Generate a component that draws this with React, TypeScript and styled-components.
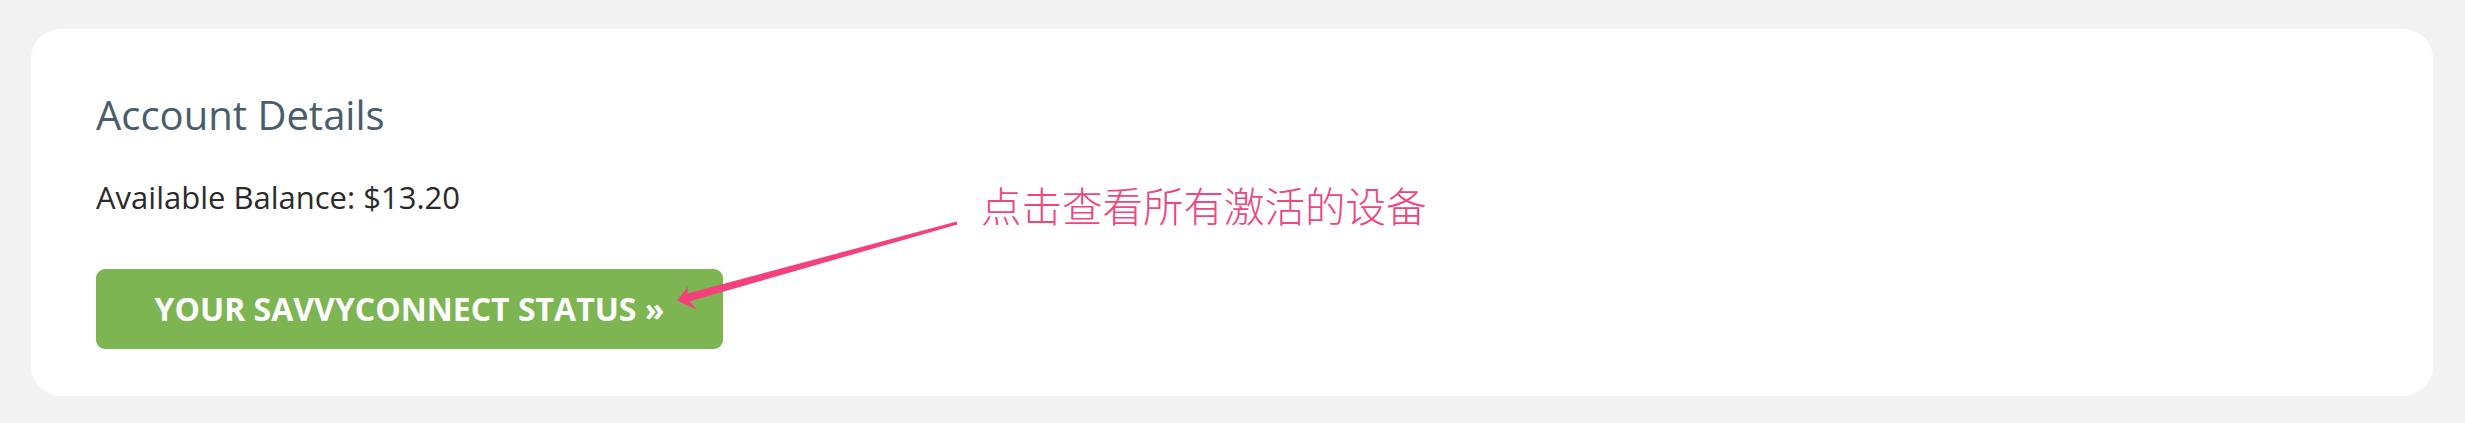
import React from "react";
import styled, { createGlobalStyle } from "styled-components";

const GlobalStyle = createGlobalStyle`
  html, body {
    margin: 0;
    padding: 0;
    background: #f3f3f3;
    font-family: "Open Sans", "Liberation Sans", sans-serif;
  }
  * { box-sizing: border-box; }
`;

const Page = styled.main`
  padding: 29px 32px 27px 31px;
`;

const Card = styled.section`
  position: relative;
  background: #ffffff;
  border-radius: 30px;
  padding: 62px 65px 47px;
`;

const Title = styled.h2`
  margin: 0 0 40px;
  font-size: 40px;
  line-height: 48px;
  font-weight: 400;
  color: #4a5d6b;
`;

const Balance = styled.p`
  margin: 0 0 54px;
  font-size: 31px;
  line-height: 36px;
  color: #2b2b2b;
`;

const StatusButton = styled.a`
  display: flex;
  align-items: center;
  justify-content: center;
  width: 627px;
  height: 80px;
  border-radius: 9px;
  background: #7db553;
  color: #ffffff;
  font-size: 32px;
  line-height: 32px;
  font-weight: 700;
  text-decoration: none;
  text-transform: uppercase;
  cursor: pointer;
`;

const Note = styled.span`
  position: absolute;
  left: 950px;
  top: 155px;
  font-family: "Noto Sans CJK SC", "Noto Sans", sans-serif;
  font-size: 40.5px;
  line-height: 41px;
  font-weight: 300;
  color: #ee467f;
  white-space: nowrap;
`;

const Overlay = styled.svg`
  position: absolute;
  left: 0;
  top: 0;
  width: 100%;
  height: 100%;
  pointer-events: none;
  overflow: visible;
`;

export default function App() {
  return (
    <>
      <GlobalStyle />
      <Page>
        <Card>
          <Title>Account Details</Title>
          <Balance>Available Balance: $13.20</Balance>
          <StatusButton>Your SavvyConnect Status »</StatusButton>
          <Note>点击查看所有激活的设备</Note>
          <Overlay>
            <polygon
              fill="#f5417b"
              points="646,271.5 657,257.5 656.5,264.4 925.6,192.6 926.4,195.4 658.7,272.2 666,281"
            />
          </Overlay>
        </Card>
      </Page>
    </>
  );
}
